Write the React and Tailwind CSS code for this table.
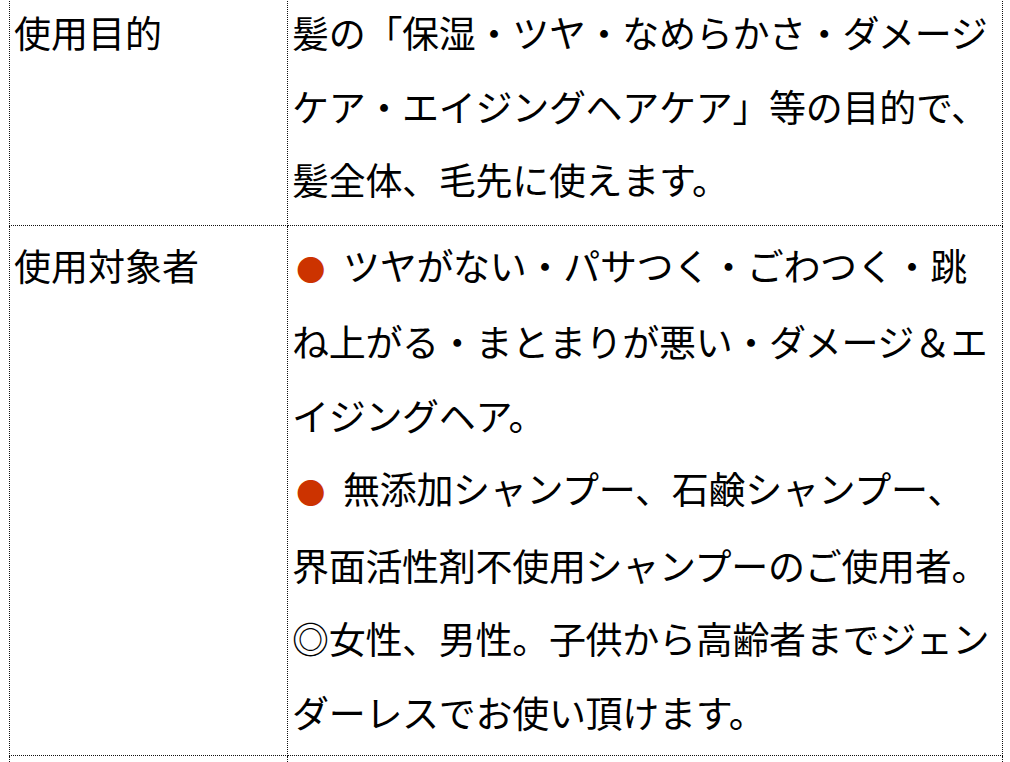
import React from 'react';

const rows = [
  {
    label: '使用目的',
    lines: [
      ['髪の「保湿・ツヤ・なめらかさ・ダメージ'],
      ['ケア・エイジングヘアケア」等の目的で、'],
      ['髪全体、毛先に使えます。'],
    ],
    first: true,
  },
  {
    label: '使用対象者',
    lines: [
      ['●', 'ツヤがない・パサつく・ごわつく・跳'],
      ['ね上がる・まとまりが悪い・ダメージ＆エ'],
      ['イジングヘア。'],
      ['●', '無添加シャンプー、石鹸シャンプー、'],
      ['界面活性剤不使用シャンプーのご使用者。'],
      ['◎女性、男性。子供から高齢者までジェン'],
      ['ダーレスでお使い頂けます。'],
    ],
  },
];

export default function App() {
  return (
    <div
      className="min-h-screen bg-white overflow-hidden pl-[9px]"
      style={{ fontFamily: '"Noto Sans CJK JP", "Noto Sans", sans-serif' }}
    >
      <table className="border-collapse w-[994px] -mt-[4px] text-[37px] leading-[73.5px] text-black">
        <tbody>
          {rows.map((row, i) => (
            <tr key={i}>
              <td
                className={`w-[278px] align-top border border-dotted border-[#111] px-[4px] ${
                  row.first ? 'pt-0 pb-[8px] border-t-0' : 'pt-[3px] pb-[6px]'
                }`}
              >
                {row.label}
              </td>
              <td
                className={`align-top border border-dotted border-[#111] px-[4px] ${
                  row.first ? 'pt-0 pb-[8px] border-t-0' : 'pt-[3px] pb-[6px]'
                }`}
              >
                {row.lines.map((l, j) => (
                  <div key={j} className="whitespace-pre tracking-[-0.3px]">
                    {l.length === 2 ? (
                      <>
                        <span className="text-[#cc3300] text-[29px] inline-block w-[37px] text-center">{l[0]}</span>
                        <span className="inline-block w-[14px]"></span>
                        {l[1]}
                      </>
                    ) : (
                      l[0]
                    )}
                  </div>
                ))}
              </td>
            </tr>
          ))}
          <tr>
            <td className="border border-dotted border-[#111] h-[40px]"></td>
            <td className="border border-dotted border-[#111] h-[40px]"></td>
          </tr>
        </tbody>
      </table>
    </div>
  );
}
